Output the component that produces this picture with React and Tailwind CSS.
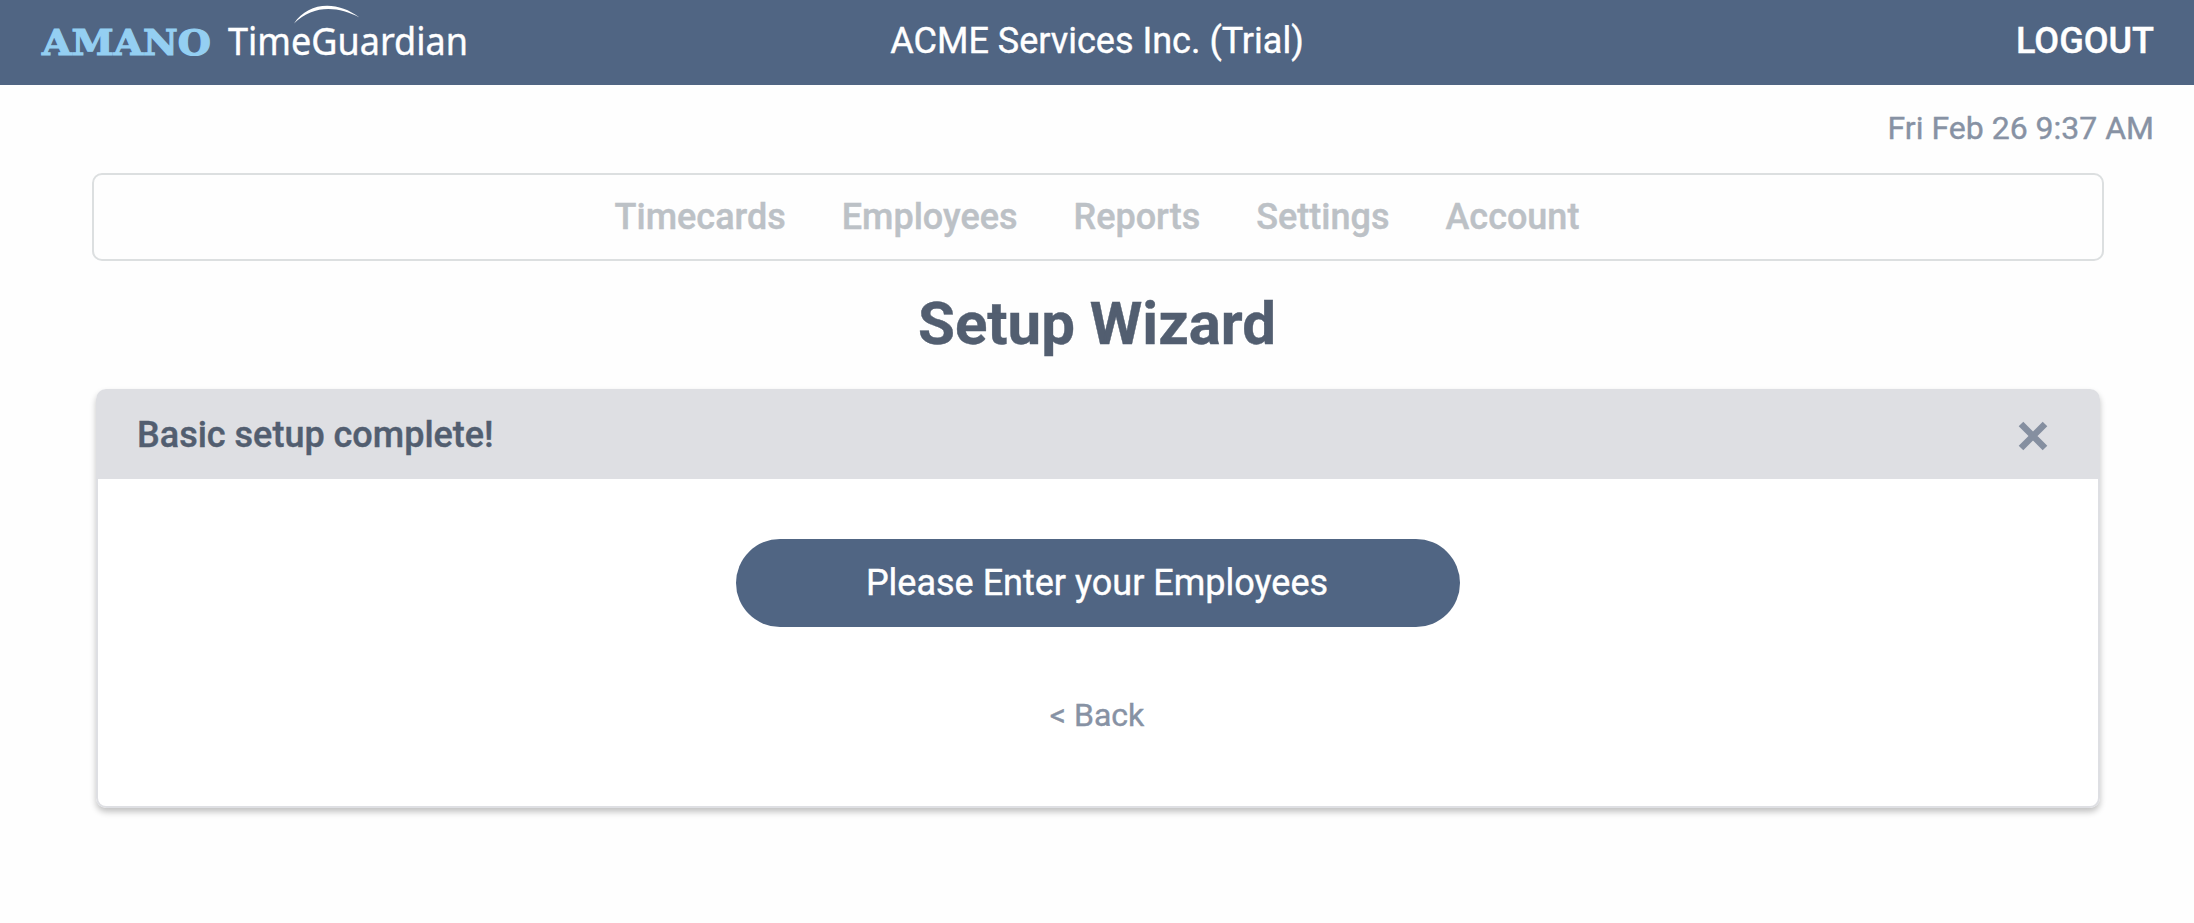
import React from "react";

const navItems = ["Timecards", "Employees", "Reports", "Settings", "Account"];

const Logo = () => (
  <svg width="440" height="85" viewBox="0 0 440 85" className="block" aria-label="Amano TimeGuardian">
    <text
      x="2"
      y="54.5"
      textLength="169"
      lengthAdjust="spacingAndGlyphs"
      strokeWidth="1.2"
      className="fill-[#94cff2] stroke-[#94cff2] font-['DejaVu_Serif',serif] text-[36px] font-bold"
    >
      AMANO
    </text>
    <text
      x="188"
      y="55"
      textLength="240"
      lengthAdjust="spacingAndGlyphs"
      strokeWidth="0.4"
      className="fill-white stroke-white font-['Noto_Sans',sans-serif] text-[37.5px]"
    >
      TimeGuardian
    </text>
    <path d="M254 23.5 C268 2 297 0 319.5 17.5 C298 6 273 4.5 254 23.5Z" className="fill-white" />
  </svg>
);

const Header = () => (
  <header className="grid h-[85px] grid-cols-3 items-center bg-[#506583] pr-10 pl-10 text-4xl text-white">
    <Logo />
    <span className="pb-1 text-center">ACME Services Inc. (Trial)</span>
    <button type="button" className="justify-self-end pb-1 font-medium">LOGOUT</button>
  </header>
);

const CloseIcon = () => (
  <svg width="30" height="30" viewBox="0 0 30 30" className="block">
    <path d="M3 3 L27 27 M27 3 L3 27" strokeWidth="6.5" className="stroke-[#858fa0]" />
  </svg>
);

const App = () => {
  return (
    <div className="min-h-screen bg-[#fefefe] font-[Roboto,sans-serif] [-webkit-text-stroke-width:0.4px]">
      <Header />

      <p className="pt-[23px] pr-10 text-right text-[32px] leading-10 text-[#8792a4]">Fri Feb 26 9:37 AM</p>

      <main className="pl-0.5">
        {/* Main navigation */}
        <nav className="mx-auto mt-[25px] flex h-[88px] w-[2012px] items-center justify-center gap-14 rounded-[10px] border-2 border-[#dcdfe0] pr-0.5 text-4xl font-medium text-[#bcc1c6]">
          {navItems.map((item) => (
            <a key={item} href="#">{item}</a>
          ))}
        </nav>

        <h1 className="mt-7 pr-0.5 text-center text-[60px] leading-[70px] font-bold text-[#525e70]">Setup Wizard</h1>

        {/* Wizard step */}
        <section className="mx-auto mt-[30px] h-[419px] w-[2004px] rounded-[10px] bg-white shadow-[0_4px_6px_0_rgba(0,0,0,0.24)]">
          <div className="flex h-[90px] items-center justify-between rounded-t-[10px] bg-[#dedfe3] pr-[52px] pl-[41px]">
            <h2 className="pt-0.5 text-4xl font-medium text-[#525e70]">Basic setup complete!</h2>
            <button type="button" aria-label="Close" className="pt-1">
              <CloseIcon />
            </button>
          </div>
          <div className="flex h-[329px] flex-col items-center rounded-b-[10px] border-x-2 border-b-2 border-[#dedfe3] pt-[60px]">
            <button type="button" className="h-[88px] w-[724px] rounded-full bg-[#506583] pr-0.5 text-4xl text-white">
              Please Enter your Employees
            </button>
            <button type="button" className="mt-[68px] pr-0.5 text-[32px] leading-10 text-[#8792a4]">&lt; Back</button>
          </div>
        </section>
      </main>
    </div>
  );
};

export default App;
